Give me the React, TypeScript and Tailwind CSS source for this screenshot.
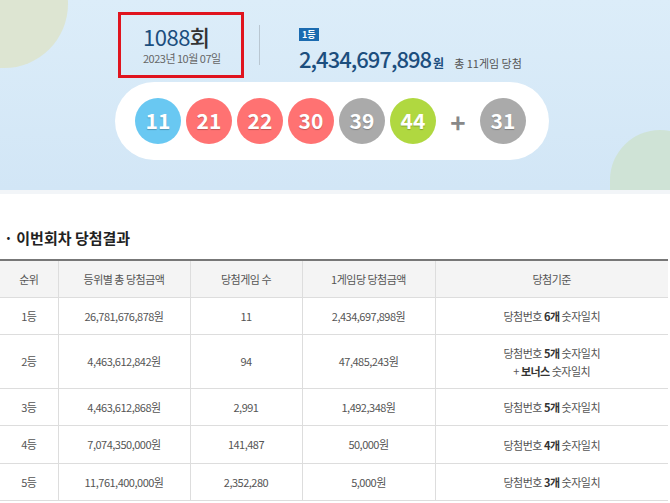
const balls = [
  { n: 11, c: 'bg-[#69c8f2]' },
  { n: 21, c: 'bg-[#ff7272]' },
  { n: 22, c: 'bg-[#ff7272]' },
  { n: 30, c: 'bg-[#ff7272]' },
  { n: 39, c: 'bg-[#aaaaaa]' },
  { n: 44, c: 'bg-[#b0d840]' },
]

function Ball({ n, c }: { n: number; c: string }) {
  return (
    <div className={`w-[46px] h-[46px] rounded-full ${c} flex items-center justify-center text-white text-[21px] font-bold`}
      style={{ textShadow: '0 1px 1px rgba(0,0,0,0.25)' }}>
      {n}
    </div>
  )
}

const rows = [
  ['1등', '26,781,676,878원', '11', '2,434,697,898원', ['6개'], 'h-[37px]'],
  ['2등', '4,463,612,842원', '94', '47,485,243원', ['5개', 'bonus'], 'h-[54px]'],
  ['3등', '4,463,612,868원', '2,991', '1,492,348원', ['5개'], 'h-[37px]'],
  ['4등', '7,074,350,000원', '141,487', '50,000원', ['4개'], 'h-[38px]'],
  ['5등', '11,761,400,000원', '2,352,280', '5,000원', ['3개'], 'h-[37px]'],
] as const

export default function App() {
  return (
    <div className="w-[670px] h-[503px] overflow-hidden bg-white text-[#333]" style={{ fontFamily: '"Noto Sans CJK KR", "Noto Sans", sans-serif' }}>
      {/* Banner */}
      <div className="relative h-[190px] bg-gradient-to-b from-[#dcedf9] to-[#d2e6f6] overflow-hidden">
        <div className="absolute -left-[60px] -top-[60px] w-[128px] h-[128px] rounded-full bg-[#dde5d2]" />
        <div className="absolute right-[-40px] top-[130px] w-[100px] h-[120px] rounded-full bg-[#cfe3d6]" />
        <div className="relative flex items-center pl-[118px] pt-[12px]">
          <div className="w-[126px] h-[66px] border-[3px] border-[#e0141e] pl-[22px] pt-[8px]">
            <div className="text-[22px] leading-[26px] text-[#1c4e7e] tracking-[-0.5px]">1088<span className="font-medium text-[#333]">회</span></div>
            <div className="text-[11px] leading-[16px] mt-[1px] text-[#666] -tracking-[0.5px]">2023년 10월 07일</div>
          </div>
          <div className="ml-[15px] w-px h-[40px] bg-[#b9c7d2]" />
          <div className="ml-[39px] pt-[4px]">
            <span className="inline-block bg-[#1b6bb0] text-white text-[9px] font-bold px-[3px] leading-[13px]">1등</span>
            <div className="flex items-baseline gap-[6px] -mt-[1px]">
              <span className="text-[22px] font-medium text-[#1c4e7e] tracking-[-1px]">2,434,697,898</span>
              <span className="text-[12px] font-bold text-[#1c4e7e] -ml-[4px]">원</span>
              <span className="text-[11px] text-[#555] ml-[4px]">총 11게임 당첨</span>
            </div>
          </div>
        </div>
        <div className="ml-[115px] mt-[4px] w-[434px] h-[78px] rounded-full bg-white flex items-center pl-[20px] gap-[5px]">
          {balls.map((b) => <Ball key={b.n} n={b.n} c={b.c} />)}
          <span className="w-[34px] text-center text-[26px] font-bold text-[#888]">+</span>
          <Ball n={31} c="bg-[#aaaaaa]" />
        </div>
      </div>
      <div className="h-[4px] bg-[#f2f5f8]" />

      <div className="mt-[33px] px-[4px] text-[15px] font-bold text-[#222]">· 이번회차 당첨결과</div>

      <table className="mt-[9px] w-[668px] border-collapse text-[11px] text-[#555] text-center tracking-[-0.5px]">
        <thead>
          <tr className="h-[38px] bg-[#f4f4f4] border-t-2 border-[#777]">
            <th className="font-normal w-[58px] border-r border-b border-[#ddd]">순위</th>
            <th className="font-normal w-[132px] border-r border-b border-[#ddd]">등위별 총 당첨금액</th>
            <th className="font-normal w-[112px] border-r border-b border-[#ddd]">당첨게임 수</th>
            <th className="font-normal w-[133px] border-r border-b border-[#ddd]">1게임당 당첨금액</th>
            <th className="font-normal border-b border-[#ddd]">당첨기준</th>
          </tr>
        </thead>
        <tbody>
          {rows.map(([r, t, g, p, crit, h]) => (
            <tr key={r} className={`${h} border-b border-[#ddd]`}>
              <td className="border-r border-[#ddd]">{r}</td>
              <td className="border-r border-[#ddd]">{t}</td>
              <td className="border-r border-[#ddd]">{g}</td>
              <td className="border-r border-[#ddd]">{p}</td>
              <td className="leading-[18px]">
                <div>당첨번호 <b className="font-semibold text-[#333]">{crit[0]}</b> 숫자일치</div>
                {crit.length > 1 && <div>+ <b className="font-semibold text-[#333]">보너스</b> 숫자일치</div>}
              </td>
            </tr>
          ))}
        </tbody>
      </table>
    </div>
  )
}
